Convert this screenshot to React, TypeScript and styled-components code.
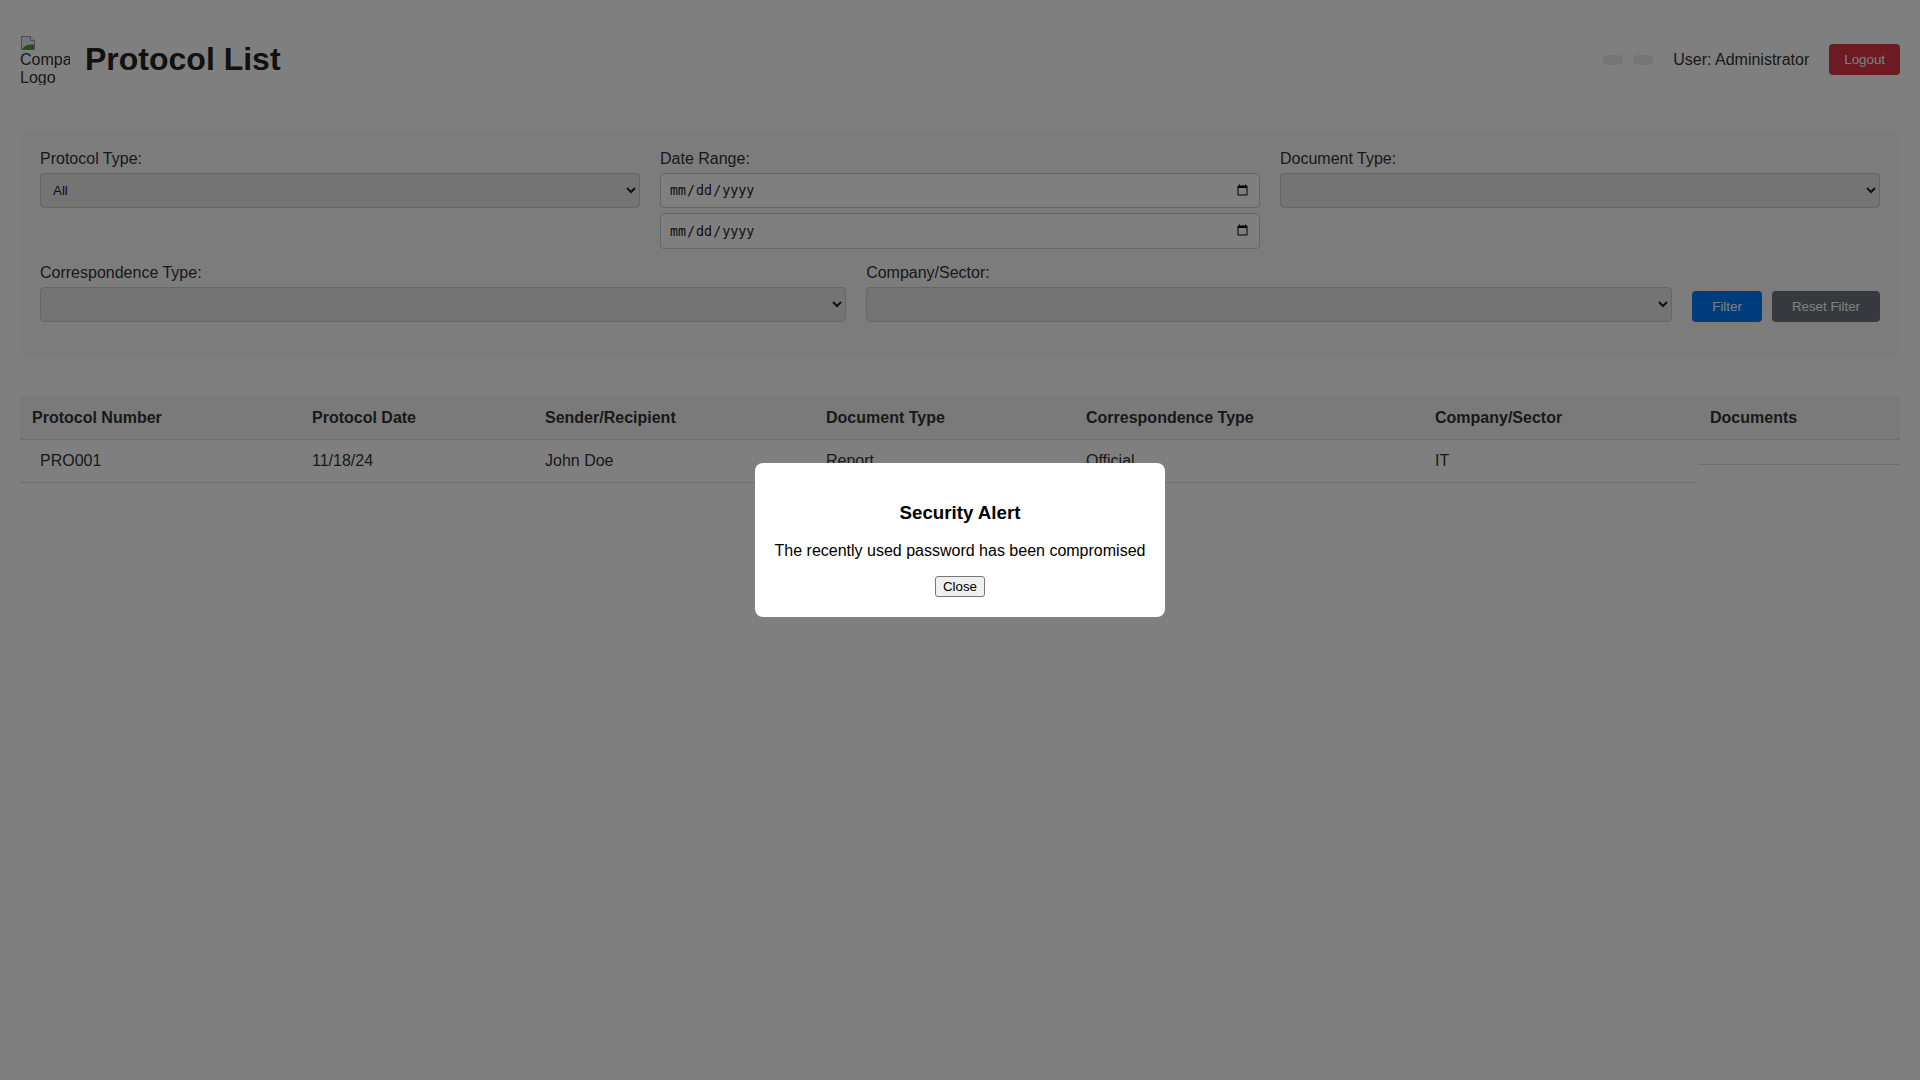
import styled, { createGlobalStyle } from 'styled-components';

const GlobalStyle = createGlobalStyle`
  body {
    margin: 0;
    font-family: "Liberation Sans", Arial, sans-serif;
    color: #333;
    background: #fff;
  }
`;

const Page = styled.div`
  padding: 0 20px;
`;

const Header = styled.header`
  display: flex;
  align-items: center;
  justify-content: space-between;
  padding: 20px 0;
  margin-bottom: 10px;
`;

const Brand = styled.div`
  display: flex;
  align-items: center;
  gap: 15px;
`;

const Logo = styled.div`
  width: 50px;
  height: 50px;
  overflow: hidden;
  font-size: 16px;
  color: #333;
  svg {
    display: block;
  }
`;

const Title = styled.h1`
  margin: 0.67em 0;
  font-size: 32px;
  color: #222;
`;

const UserArea = styled.div`
  display: flex;
  align-items: center;
  gap: 20px;
`;

const LangGroup = styled.div`
  display: flex;
  gap: 10px;
`;

const LangButton = styled.button`
  width: 20px;
  height: 10px;
  padding: 0;
  border: none;
  border-radius: 5px;
  background: #ececec;
`;

const UserName = styled.span`
  font-size: 16px;
`;

const colors: Record<string, string> = {
  primary: '#007bff',
  secondary: '#6c757d',
  danger: '#dc3545',
};

const ActionButton = styled.button<{ $variant: string }>`
  padding: 8px 20px;
  border: none;
  border-radius: 4px;
  background: ${(p) => colors[p.$variant]};
  color: #fff;
  font-family: "Liberation Sans", Arial, sans-serif;
  font-size: 13.333px;
  cursor: pointer;
`;

const LogoutButton = styled(ActionButton)`
  padding: 8px 15px;
`;

const FilterPanel = styled.section`
  background: #f8f9fa;
  border-radius: 8px;
  padding: 20px;
  margin-bottom: 40px;
`;

const FilterRow = styled.div<{ $align: string }>`
  display: flex;
  gap: 20px;
  align-items: ${(p) => p.$align};
`;

const FilterGroup = styled.div`
  flex: 1;
  display: flex;
  flex-direction: column;
  gap: 5px;
  margin-bottom: 15px;
`;

const Label = styled.label`
  font-size: 16px;
  color: #333;
`;

const Select = styled.select`
  box-sizing: border-box;
  width: 100%;
  height: 35px;
  padding: 8px;
  border: 1px solid #ccc;
  border-radius: 4px;
  background: #e8e8e8;
  color: #222;
  font-family: "Liberation Sans", Arial, sans-serif;
  font-size: 13.333px;
`;

const DateInput = styled.input`
  box-sizing: border-box;
  width: 100%;
  height: 35.5px;
  padding: 8px;
  border: 1px solid #ccc;
  border-radius: 4px;
  background: #fff;
  color: #222;
  font-family: "DejaVu Sans Mono", monospace;
  font-size: 13.333px;
`;

const ButtonGroup = styled.div`
  display: flex;
  gap: 10px;
  margin-bottom: 15px;
`;

const Table = styled.table`
  width: 100%;
  border-collapse: collapse;
  table-layout: fixed;
`;

const Th = styled.th<{ $width: number }>`
  box-sizing: border-box;
  width: ${(p) => p.$width}px;
  padding: 12px;
  text-align: left;
  font-size: 16px;
  background: #f4f5f6;
  border-bottom: 1px solid #ddd;
`;

const Td = styled.td`
  padding: 12px;
  font-size: 16px;
  border-bottom: 1px solid #ddd;
`;

const NumberCell = styled(Td)`
  padding-left: 20px;
`;

const DocumentsCell = styled(Td)`
  display: flex;
  gap: 5px;
`;

const Overlay = styled.div`
  position: fixed;
  inset: 0;
  background: rgba(0, 0, 0, 0.5);
  display: flex;
  align-items: center;
  justify-content: center;
`;

const Modal = styled.div`
  background: #fff;
  padding: 20px;
  border-radius: 8px;
  text-align: center;
  color: #000;
`;

const ModalTitle = styled.h3`
  margin: 1em 0;
  font-size: 18.72px;
`;

const ModalText = styled.p`
  margin: 16px 0;
  font-size: 16px;
`;

const CloseButton = styled.button`
  padding: 2px 7px;
  border: 1px solid #767676;
  border-radius: 3px;
  background: #efefef;
  color: #000;
  font-family: "Liberation Sans", Arial, sans-serif;
  font-size: 13.333px;
`;

const BrokenImage = () => (
  <svg width="16" height="16" viewBox="0 0 16 16">
    <path d="M1.5 1.5h9l4 4v9h-13z" fill="#e8eef4" stroke="#9a9a9a" />
    <path d="M10.5 1.5v4h4" fill="#fff" stroke="#9a9a9a" />
    <path d="M2 14.5c2-4 6-5.5 12-5v5z" fill="#4b9a3c" />
  </svg>
);

const columns = [
  { title: 'Protocol Number', width: 280 },
  { title: 'Protocol Date', width: 233 },
  { title: 'Sender/Recipient', width: 281 },
  { title: 'Document Type', width: 260 },
  { title: 'Correspondence Type', width: 349 },
  { title: 'Company/Sector', width: 275 },
  { title: 'Documents', width: 202 },
];

const App = () => {
  return (
    <>
      <GlobalStyle />
      <Page>
        <Header>
          <Brand>
            <Logo>
              <BrokenImage />
              Company Logo
            </Logo>
            <Title>Protocol List</Title>
          </Brand>
          <UserArea>
            <LangGroup>
              <LangButton />
              <LangButton />
            </LangGroup>
            <UserName>User: Administrator</UserName>
            <LogoutButton $variant="danger">Logout</LogoutButton>
          </UserArea>
        </Header>

        <FilterPanel>
          <FilterRow $align="flex-start">
            <FilterGroup>
              <Label>Protocol Type:</Label>
              <Select defaultValue="all">
                <option value="all">All</option>
                <option value="in">Incoming</option>
                <option value="out">Outgoing</option>
              </Select>
            </FilterGroup>
            <FilterGroup>
              <Label>Date Range:</Label>
              <DateInput type="date" />
              <DateInput type="date" />
            </FilterGroup>
            <FilterGroup>
              <Label>Document Type:</Label>
              <Select defaultValue="">
                <option value=""></option>
              </Select>
            </FilterGroup>
          </FilterRow>
          <FilterRow $align="flex-end">
            <FilterGroup>
              <Label>Correspondence Type:</Label>
              <Select defaultValue="">
                <option value=""></option>
              </Select>
            </FilterGroup>
            <FilterGroup>
              <Label>Company/Sector:</Label>
              <Select defaultValue="">
                <option value=""></option>
              </Select>
            </FilterGroup>
            <ButtonGroup>
              <ActionButton $variant="primary">Filter</ActionButton>
              <ActionButton $variant="secondary">Reset Filter</ActionButton>
            </ButtonGroup>
          </FilterRow>
        </FilterPanel>

        <Table>
          <thead>
            <tr>
              {columns.map((c) => (
                <Th key={c.title} $width={c.width}>
                  {c.title}
                </Th>
              ))}
            </tr>
          </thead>
          <tbody>
            <tr>
              <NumberCell>PRO001</NumberCell>
              <Td>11/18/24</Td>
              <Td>John Doe</Td>
              <Td>Report</Td>
              <Td>Official</Td>
              <Td>IT</Td>
              <DocumentsCell></DocumentsCell>
            </tr>
          </tbody>
        </Table>
      </Page>

      <Overlay>
        <Modal>
          <ModalTitle>Security Alert</ModalTitle>
          <ModalText>The recently used password has been compromised</ModalText>
          <CloseButton>Close</CloseButton>
        </Modal>
      </Overlay>
    </>
  );
};

export default App;
